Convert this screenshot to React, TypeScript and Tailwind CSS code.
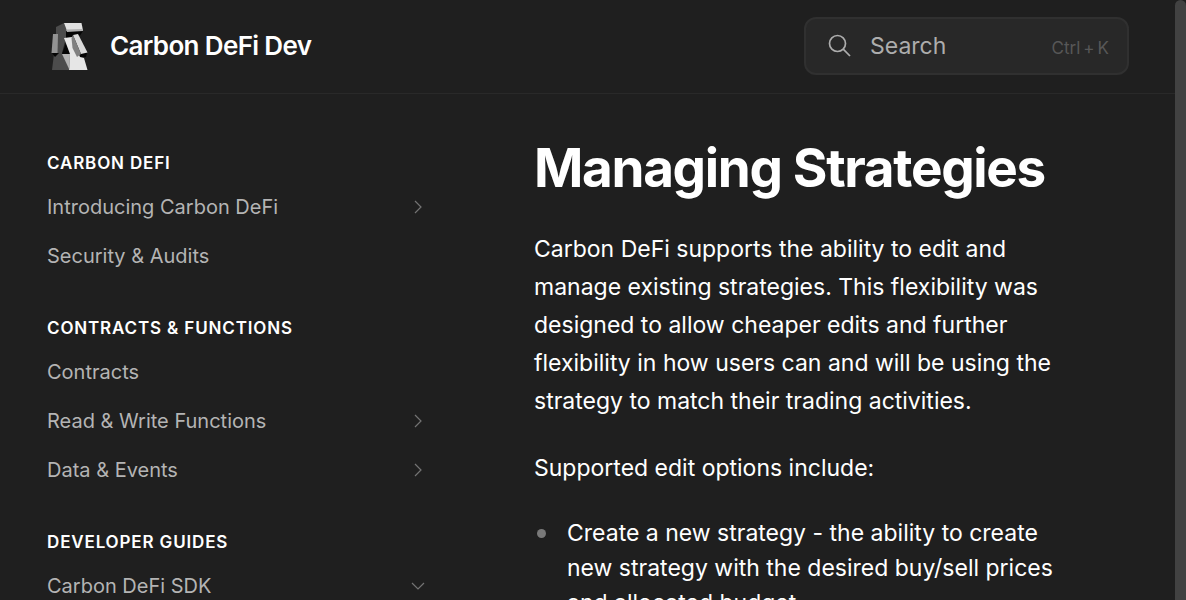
import React from "react";

type NavItem = { label: string; state?: "closed" | "open" };
type NavGroup = { title: string; items: NavItem[] };

const groups: NavGroup[] = [
  {
    title: "Carbon DeFi",
    items: [{ label: "Introducing Carbon DeFi", state: "closed" }, { label: "Security & Audits" }],
  },
  {
    title: "Contracts & Functions",
    items: [
      { label: "Contracts" },
      { label: "Read & Write Functions", state: "closed" },
      { label: "Data & Events", state: "closed" },
    ],
  },
  { title: "Developer Guides", items: [{ label: "Carbon DeFi SDK", state: "open" }] },
];

function Logo() {
  return (
    <svg viewBox="0 2 60 58" className="h-[58px] w-[60px] shrink-0" aria-hidden="true">
      <path d="M16 12 24 8 27 16 26 23 22 38 30 55H12L14 39 16 33Z" fill="#4c4c4c" />
      <path d="M26 16H43L40 20.500H33L31 24H26ZM26 28 30 39H22ZM12 38H19L15 42ZM34 38 47 38 46 42H37Z" fill="#050505" />
      <path d="M24 8H41.500L43 15.500 27 16Z" fill="#e2e2e2" />
      <path d="M26 14.500 42.700 14 43 16 27 17Z" fill="#b0b0b0" />
      <path d="M13 19H18L17.500 38H11.500Z" fill="#939393" />
      <path d="M24 23 32 22 40 42 44 43 47.500 55H29L30 39Z" fill="#e6e6e6" />
      <path d="M22 39H30L29.500 55Z" fill="#b3b3b3" />
      <path d="M33 20 38 19 47.500 37.500 41 39Z" fill="#dadada" />
      <path d="M33 20 41 39 37 42 32.500 33 31.500 23Z" fill="#808080" />
    </svg>
  );
}

function Chevron({ open }: { open: boolean }) {
  return (
    <svg viewBox="0 0 16 16" className="size-4 shrink-0" fill="none" stroke="#747474" strokeWidth="1.2" aria-hidden="true">
      <path d={open ? "M2 5 8 11 14 5" : "M5 2 11 8 5 14"} />
    </svg>
  );
}

export default function App() {
  return (
    <div className="flex h-screen overflow-hidden bg-[#1f1f1f] font-['Inter',sans-serif] text-white">
      <div className="min-w-0 flex-1">
        <header className="flex items-center justify-between border-b border-[#292929] pt-[17px] pr-[46px] pb-[18px] pl-10">
          <a href="#" className="flex items-center gap-[10px] text-[26px] leading-[38px] font-semibold tracking-tight">
            <Logo />
            Carbon DeFi Dev
          </a>
          <button
            type="button"
            className="flex h-[58px] w-[325px] items-center rounded-xl border-2 border-[#303030] bg-[#282828] pr-[18px] pl-[22px] text-left"
          >
            <svg viewBox="0 0 24 24" className="size-6 shrink-0" fill="none" stroke="#adadad" strokeWidth="1.7" aria-hidden="true">
              <circle cx="9.5" cy="9.5" r="8" />
              <path d="M15.2 15.2 22 22" />
            </svg>
            <span className="flex flex-1 items-baseline justify-between pl-[18px] text-[23px] text-[#adadad]">
              Search
              <span className="flex gap-[3px] text-[17px] text-[#575757]">
                <span>Ctrl</span>
                <span>+</span>
                <span>K</span>
              </span>
            </span>
          </button>
        </header>

        <div className="flex">
          <nav className="flex w-[440px] shrink-0 flex-col gap-[35px] pt-[56px] pr-[14px] pl-[47px]">
            {groups.map((group) => (
              <section key={group.title}>
                <h2 className="text-[17px] leading-[26px] font-semibold tracking-wider uppercase">{group.title}</h2>
                <ul className="pt-[6px]">
                  {group.items.map((item) => (
                    <li key={item.label}>
                      <a href="#" className="flex h-[49px] items-center justify-between text-[20px] text-[#b4b4b4]">
                        {item.label}
                        {item.state && <Chevron open={item.state === "open"} />}
                      </a>
                    </li>
                  ))}
                </ul>
              </section>
            ))}
          </nav>

          <main className="min-w-0 flex-1 pt-[42px] pr-[100px] pl-[94px] text-[23px]">
            <h1 className="text-[53px] leading-[64px] font-bold tracking-tight">Managing Strategies</h1>
            <p className="pt-[30px] leading-[38px]">
              Carbon DeFi supports the ability to edit and manage existing strategies. This flexibility was designed to
              allow cheaper edits and further flexibility in how users can and will be using the strategy to match their
              trading activities.
            </p>
            <p className="pt-[29px] leading-[38px]">Supported edit options include:</p>
            <ul className="pt-[29px] leading-[35px]">
              <li className="flex gap-[21px] pl-[3px]">
                <span className="mt-[13px] size-[9px] shrink-0 rounded-full bg-[#797979]" />
                <span>
                  Create a new strategy - the ability to create new strategy with the desired buy/sell prices and
                  allocated budget.
                </span>
              </li>
            </ul>
          </main>
        </div>
      </div>
      <div className="w-[11px] shrink-0 rounded-t-full bg-[#424242]" />
    </div>
  );
}
